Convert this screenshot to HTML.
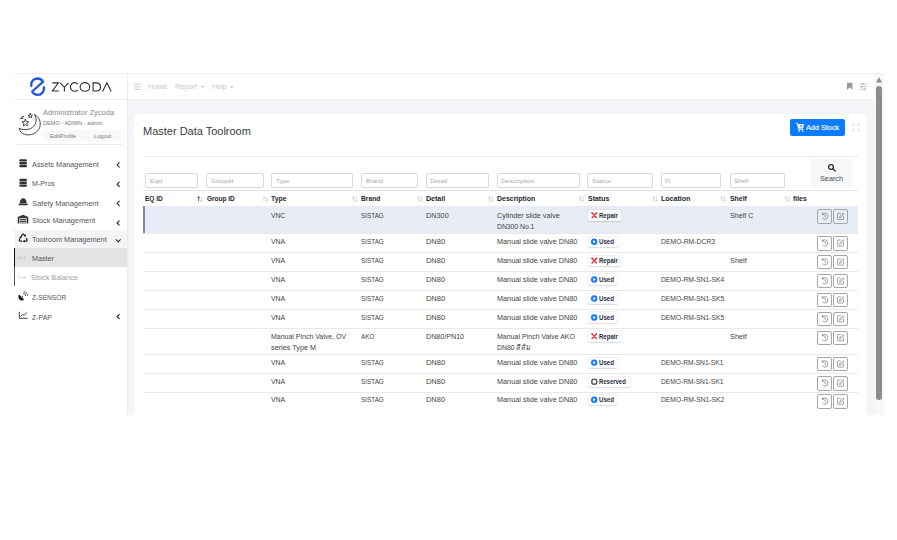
<!DOCTYPE html>
<html><head><meta charset="utf-8"><style>
html,body{margin:0;padding:0;width:897px;height:540px;overflow:hidden;background:#fff;}
body{position:relative;font-family:"Liberation Sans",sans-serif;}
.a{position:absolute;}
.t{position:absolute;white-space:pre;}
#clip{position:absolute;left:0;top:0;width:897px;height:415.5px;overflow:hidden;}
</style></head><body>
<div id="clip">
<div class="a" style="left:13.50px;top:73.00px;width:870.00px;height:342.50px;background:#fff;"></div>
<div class="a" style="left:13.50px;top:73.00px;width:870.00px;height:0.70px;background:#eeeeee;"></div>
<div class="a" style="left:127.50px;top:99.40px;width:746.50px;height:316.10px;background:#f4f5f9;"></div>
<div class="a" style="left:127.50px;top:98.70px;width:746.50px;height:0.70px;background:#efefef;"></div>
<div class="a" style="left:127.00px;top:73.70px;width:0.70px;height:341.80px;background:#ececec;"></div>
<div class="a" style="left:13.50px;top:98.50px;width:113.50px;height:0.60px;background:#f0f0f0;"></div>
<div class="a" style="left:874.00px;top:73.70px;width:9.50px;height:341.80px;background:#f8f8f8;"></div>
<div class="a" style="left:876.00px;top:85.80px;width:6.00px;height:314.70px;background:#8c8c8c;border-radius:3px;"></div>
<div class="t" style="left:42.80px;top:109.20px;font-size:7.6px;line-height:7.6px;color:#8a8a8a;font-weight:normal;transform:scaleX(0.9923);transform-origin:0 0;">Administrator Zycoda</div>
<div class="t" style="left:42.80px;top:120.80px;font-size:5.9px;line-height:5.9px;color:#7a7a7a;font-weight:normal;transform:scaleX(0.9468);transform-origin:0 0;">DEMO - ADMIN - admin</div>
<div class="a" style="left:42.80px;top:130.00px;width:80.20px;height:10.80px;background:#f7f8fa;"></div>
<div class="t" style="left:49.90px;top:133.90px;font-size:5.9px;line-height:5.9px;color:#777;font-weight:normal;transform:scaleX(0.9643);transform-origin:0 0;">EditProfile</div>
<div class="t" style="left:94.30px;top:133.90px;font-size:5.9px;line-height:5.9px;color:#777;font-weight:normal;transform:scaleX(0.9650);transform-origin:0 0;">Logout</div>
<div class="a" style="left:17.30px;top:144.40px;width:105.70px;height:0.70px;background:#ececec;"></div>
<div class="t" style="left:32.30px;top:161.10px;font-size:7.4px;line-height:7.4px;color:#555555;font-weight:normal;transform:scaleX(0.9915);transform-origin:0 0;">Assets Management</div>
<div class="t" style="left:32.30px;top:180.40px;font-size:7.4px;line-height:7.4px;color:#555555;font-weight:normal;transform:scaleX(0.9610);transform-origin:0 0;">M-Pros</div>
<div class="t" style="left:32.30px;top:199.50px;font-size:7.4px;line-height:7.4px;color:#555555;font-weight:normal;">Safety Management</div>
<div class="t" style="left:32.30px;top:217.40px;font-size:7.4px;line-height:7.4px;color:#555555;font-weight:normal;transform:scaleX(0.9939);transform-origin:0 0;">Stock Management</div>
<div class="a" style="left:14.00px;top:229.80px;width:113.00px;height:18.30px;background:#f3f4f6;"></div>
<div class="t" style="left:32.30px;top:235.70px;font-size:7.4px;line-height:7.4px;color:#555555;font-weight:normal;transform:scaleX(0.9882);transform-origin:0 0;">Toolroom Management</div>
<div class="a" style="left:14.00px;top:248.10px;width:113.00px;height:19.30px;background:#e3e3e3;"></div>
<div class="a" style="left:13.60px;top:248.10px;width:1.30px;height:19.30px;background:#111;"></div>
<div class="a" style="left:13.60px;top:267.40px;width:1.30px;height:18.60px;background:#555;"></div>
<div class="t" style="left:31.80px;top:254.60px;font-size:7.4px;line-height:7.4px;color:#555;font-weight:normal;transform:scaleX(0.9693);transform-origin:0 0;">Master</div>
<div class="t" style="left:31.40px;top:274.30px;font-size:7.4px;line-height:7.4px;color:#a0a0a0;font-weight:normal;transform:scaleX(0.9905);transform-origin:0 0;">Stock Balance</div>
<div class="t" style="left:32.00px;top:294.20px;font-size:7.4px;line-height:7.4px;color:#555555;font-weight:normal;transform:scaleX(0.8956);transform-origin:0 0;">Z-SENSOR</div>
<div class="t" style="left:32.00px;top:313.60px;font-size:7.4px;line-height:7.4px;color:#555555;font-weight:normal;transform:scaleX(0.9378);transform-origin:0 0;">Z-PAP</div>
<div class="t" style="left:147.80px;top:83.30px;font-size:7.4px;line-height:7.4px;color:#c6c6c6;font-weight:normal;transform:scaleX(0.9737);transform-origin:0 0;">Home</div>
<div class="t" style="left:174.60px;top:83.30px;font-size:7.4px;line-height:7.4px;color:#c6c6c6;font-weight:normal;transform:scaleX(1.0051);transform-origin:0 0;">Report</div>
<div class="t" style="left:211.60px;top:83.30px;font-size:7.4px;line-height:7.4px;color:#c6c6c6;font-weight:normal;transform:scaleX(0.9669);transform-origin:0 0;">Help</div>
<div class="a" style="left:133.80px;top:113.60px;width:733.00px;height:316.40px;background:#fff;border-radius:3px;box-shadow:0 0 1px rgba(0,0,0,0.06);"></div>
<div class="t" style="left:143.40px;top:125.60px;font-size:11.8px;line-height:11.8px;color:#3a3a3a;font-weight:normal;transform:scaleX(0.9314);transform-origin:0 0;">Master Data Toolroom</div>
<div class="a" style="left:789.90px;top:118.90px;width:55.10px;height:16.90px;background:#0b7cfe;border-radius:2px;"></div>
<div class="t" style="left:806.00px;top:124.10px;font-size:7.4px;line-height:7.4px;color:#fff;font-weight:normal;transform:scaleX(0.9855);transform-origin:0 0;-webkit-text-stroke:0.15px #fff;">Add Stock</div>
<div class="a" style="left:143.40px;top:156.20px;width:714.90px;height:0.70px;background:#ebebeb;"></div>
<div class="a" style="left:811.20px;top:158.60px;width:40.90px;height:28.60px;background:#f6f7f9;border-radius:2px;"></div>
<div class="t" style="left:820.20px;top:175.20px;font-size:7.4px;line-height:7.4px;color:#4a4a4a;font-weight:normal;transform:scaleX(0.9820);transform-origin:0 0;">Search</div>
<div class="a" style="left:145.20px;top:173.30px;width:52.90px;height:14.60px;box-sizing:border-box;border:0.7px solid #d8d8d8;border-radius:2px;background:#fff;"></div>
<div class="t" style="left:149.70px;top:177.90px;font-size:6.1px;line-height:6.1px;color:#ababab;font-weight:normal;transform:scaleX(1.0243);transform-origin:0 0;">Eqid</div>
<div class="a" style="left:206.30px;top:173.30px;width:57.50px;height:14.60px;box-sizing:border-box;border:0.7px solid #d8d8d8;border-radius:2px;background:#fff;"></div>
<div class="t" style="left:210.80px;top:177.90px;font-size:6.1px;line-height:6.1px;color:#ababab;font-weight:normal;transform:scaleX(1.0122);transform-origin:0 0;">GroupId</div>
<div class="a" style="left:271.20px;top:173.30px;width:81.60px;height:14.60px;box-sizing:border-box;border:0.7px solid #d8d8d8;border-radius:2px;background:#fff;"></div>
<div class="t" style="left:275.70px;top:177.90px;font-size:6.1px;line-height:6.1px;color:#ababab;font-weight:normal;transform:scaleX(1.0137);transform-origin:0 0;">Type</div>
<div class="a" style="left:361.10px;top:173.30px;width:56.80px;height:14.60px;box-sizing:border-box;border:0.7px solid #d8d8d8;border-radius:2px;background:#fff;"></div>
<div class="t" style="left:365.60px;top:177.90px;font-size:6.1px;line-height:6.1px;color:#ababab;font-weight:normal;transform:scaleX(1.0574);transform-origin:0 0;">Brand</div>
<div class="a" style="left:425.90px;top:173.30px;width:62.90px;height:14.60px;box-sizing:border-box;border:0.7px solid #d8d8d8;border-radius:2px;background:#fff;"></div>
<div class="t" style="left:430.40px;top:177.90px;font-size:6.1px;line-height:6.1px;color:#ababab;font-weight:normal;transform:scaleX(1.1030);transform-origin:0 0;">Detail</div>
<div class="a" style="left:496.70px;top:173.30px;width:82.90px;height:14.60px;box-sizing:border-box;border:0.7px solid #d8d8d8;border-radius:2px;background:#fff;"></div>
<div class="t" style="left:501.20px;top:177.90px;font-size:6.1px;line-height:6.1px;color:#ababab;font-weight:normal;transform:scaleX(1.0956);transform-origin:0 0;">Description</div>
<div class="a" style="left:587.10px;top:173.30px;width:66.10px;height:14.60px;box-sizing:border-box;border:0.7px solid #d8d8d8;border-radius:2px;background:#fff;"></div>
<div class="t" style="left:591.60px;top:177.90px;font-size:6.1px;line-height:6.1px;color:#ababab;font-weight:normal;transform:scaleX(1.1052);transform-origin:0 0;">Status</div>
<div class="a" style="left:660.70px;top:173.30px;width:60.70px;height:14.60px;box-sizing:border-box;border:0.7px solid #d8d8d8;border-radius:2px;background:#fff;"></div>
<div class="t" style="left:665.20px;top:177.90px;font-size:6.1px;line-height:6.1px;color:#ababab;font-weight:normal;transform:scaleX(0.9846);transform-origin:0 0;">Fl</div>
<div class="a" style="left:729.60px;top:173.30px;width:55.40px;height:14.60px;box-sizing:border-box;border:0.7px solid #d8d8d8;border-radius:2px;background:#fff;"></div>
<div class="t" style="left:734.10px;top:177.90px;font-size:6.1px;line-height:6.1px;color:#ababab;font-weight:normal;transform:scaleX(1.0223);transform-origin:0 0;">Shelf</div>
<div class="a" style="left:143.40px;top:189.60px;width:714.90px;height:1.40px;background:#dfe2e8;"></div>
<div class="a" style="left:143.40px;top:205.50px;width:714.90px;height:0.80px;background:#dcdcdc;"></div>
<div class="t" style="left:145.20px;top:195.00px;font-size:7.2px;line-height:7.2px;color:#262626;font-weight:bold;transform:scaleX(0.9092);transform-origin:0 0;">EQ ID</div>
<div class="t" style="left:206.70px;top:195.00px;font-size:7.2px;line-height:7.2px;color:#262626;font-weight:bold;transform:scaleX(0.9008);transform-origin:0 0;">Group ID</div>
<div class="t" style="left:271.20px;top:195.00px;font-size:7.2px;line-height:7.2px;color:#262626;font-weight:bold;transform:scaleX(0.9600);transform-origin:0 0;">Type</div>
<div class="t" style="left:361.10px;top:195.00px;font-size:7.2px;line-height:7.2px;color:#262626;font-weight:bold;transform:scaleX(0.9287);transform-origin:0 0;">Brand</div>
<div class="t" style="left:425.90px;top:195.00px;font-size:7.2px;line-height:7.2px;color:#262626;font-weight:bold;transform:scaleX(0.9807);transform-origin:0 0;">Detail</div>
<div class="t" style="left:496.70px;top:195.00px;font-size:7.2px;line-height:7.2px;color:#262626;font-weight:bold;transform:scaleX(0.9685);transform-origin:0 0;">Description</div>
<div class="t" style="left:587.70px;top:195.00px;font-size:7.2px;line-height:7.2px;color:#262626;font-weight:bold;transform:scaleX(0.9696);transform-origin:0 0;">Status</div>
<div class="t" style="left:660.70px;top:195.00px;font-size:7.2px;line-height:7.2px;color:#262626;font-weight:bold;transform:scaleX(0.9815);transform-origin:0 0;">Location</div>
<div class="t" style="left:729.60px;top:195.00px;font-size:7.2px;line-height:7.2px;color:#262626;font-weight:bold;transform:scaleX(0.9614);transform-origin:0 0;">Shelf</div>
<div class="t" style="left:793.40px;top:195.00px;font-size:7.2px;line-height:7.2px;color:#262626;font-weight:bold;transform:scaleX(0.9520);transform-origin:0 0;">files</div>
<div class="a" style="left:143.40px;top:206.30px;width:714.90px;height:27.40px;background:#e7ecf6;"></div>
<div class="a" style="left:143.40px;top:206.30px;width:1.50px;height:27.40px;background:#7d8bb3;"></div>
<div class="t" style="left:271.20px;top:212.00px;font-size:7.5px;line-height:7.5px;color:#444444;font-weight:normal;transform:scaleX(0.8963);transform-origin:0 0;">VNC</div>
<div class="t" style="left:361.10px;top:212.00px;font-size:7.5px;line-height:7.5px;color:#444444;font-weight:normal;transform:scaleX(0.8459);transform-origin:0 0;">SISTAG</div>
<div class="t" style="left:425.90px;top:212.00px;font-size:7.5px;line-height:7.5px;color:#444444;font-weight:normal;transform:scaleX(0.9718);transform-origin:0 0;">DN300</div>
<div class="t" style="left:496.70px;top:212.00px;font-size:7.5px;line-height:7.5px;color:#444444;font-weight:normal;transform:scaleX(0.9733);transform-origin:0 0;">Cylinder slide valve</div>
<div class="t" style="left:496.70px;top:222.70px;font-size:7.5px;line-height:7.5px;color:#444444;font-weight:normal;transform:scaleX(0.9060);transform-origin:0 0;">DN300 No.1</div>
<div class="a" style="left:587.80px;top:210.30px;width:33.60px;height:10.50px;background:#fdfdfe;border-radius:2px;box-shadow:0 0 0 0.5px rgba(0,0,0,0.06),0 0.5px 1.2px rgba(0,0,0,0.12);"></div>
<div class="t" style="left:599.00px;top:212.80px;font-size:6.8px;line-height:6.8px;color:#2a2f3a;font-weight:bold;transform:scaleX(0.8886);transform-origin:0 0;">Repair</div>
<div class="t" style="left:729.60px;top:212.00px;font-size:7.5px;line-height:7.5px;color:#444444;font-weight:normal;transform:scaleX(0.9509);transform-origin:0 0;">Shelf C</div>
<div class="a" style="left:817.10px;top:209.30px;width:14.70px;height:14.60px;box-sizing:border-box;border:0.8px solid #a2a7ae;border-radius:2px;"></div>
<div class="a" style="left:833.10px;top:209.30px;width:14.70px;height:14.60px;box-sizing:border-box;border:0.8px solid #a2a7ae;border-radius:2px;"></div>
<div class="a" style="left:143.40px;top:233.35px;width:714.90px;height:0.70px;background:#e9e9e9;"></div>
<div class="t" style="left:271.20px;top:238.30px;font-size:7.5px;line-height:7.5px;color:#444444;font-weight:normal;transform:scaleX(0.9208);transform-origin:0 0;">VNA</div>
<div class="t" style="left:361.10px;top:238.30px;font-size:7.5px;line-height:7.5px;color:#444444;font-weight:normal;transform:scaleX(0.8459);transform-origin:0 0;">SISTAG</div>
<div class="t" style="left:425.90px;top:238.30px;font-size:7.5px;line-height:7.5px;color:#444444;font-weight:normal;">DN80</div>
<div class="t" style="left:496.70px;top:238.30px;font-size:7.5px;line-height:7.5px;color:#444444;font-weight:normal;transform:scaleX(0.9690);transform-origin:0 0;">Manual slide valve DN80</div>
<div class="a" style="left:587.80px;top:236.60px;width:30.00px;height:10.50px;background:#fdfdfe;border-radius:2px;box-shadow:0 0 0 0.5px rgba(0,0,0,0.06),0 0.5px 1.2px rgba(0,0,0,0.12);"></div>
<div class="t" style="left:599.00px;top:239.10px;font-size:6.8px;line-height:6.8px;color:#2a2f3a;font-weight:bold;transform:scaleX(0.9023);transform-origin:0 0;">Used</div>
<div class="t" style="left:660.70px;top:238.30px;font-size:7.5px;line-height:7.5px;color:#444444;font-weight:normal;transform:scaleX(0.9078);transform-origin:0 0;">DEMO-RM-DCR3</div>
<div class="a" style="left:817.10px;top:236.00px;width:14.70px;height:14.60px;box-sizing:border-box;border:0.8px solid #a2a7ae;border-radius:2px;"></div>
<div class="a" style="left:833.10px;top:236.00px;width:14.70px;height:14.60px;box-sizing:border-box;border:0.8px solid #a2a7ae;border-radius:2px;"></div>
<div class="a" style="left:143.40px;top:251.85px;width:714.90px;height:0.70px;background:#e9e9e9;"></div>
<div class="t" style="left:271.20px;top:257.20px;font-size:7.5px;line-height:7.5px;color:#444444;font-weight:normal;transform:scaleX(0.9208);transform-origin:0 0;">VNA</div>
<div class="t" style="left:361.10px;top:257.20px;font-size:7.5px;line-height:7.5px;color:#444444;font-weight:normal;transform:scaleX(0.8459);transform-origin:0 0;">SISTAG</div>
<div class="t" style="left:425.90px;top:257.20px;font-size:7.5px;line-height:7.5px;color:#444444;font-weight:normal;">DN80</div>
<div class="t" style="left:496.70px;top:257.20px;font-size:7.5px;line-height:7.5px;color:#444444;font-weight:normal;transform:scaleX(0.9690);transform-origin:0 0;">Manual slide valve DN80</div>
<div class="a" style="left:587.80px;top:255.50px;width:33.60px;height:10.50px;background:#fdfdfe;border-radius:2px;box-shadow:0 0 0 0.5px rgba(0,0,0,0.06),0 0.5px 1.2px rgba(0,0,0,0.12);"></div>
<div class="t" style="left:599.00px;top:258.00px;font-size:6.8px;line-height:6.8px;color:#2a2f3a;font-weight:bold;transform:scaleX(0.8886);transform-origin:0 0;">Repair</div>
<div class="t" style="left:729.60px;top:257.20px;font-size:7.5px;line-height:7.5px;color:#444444;font-weight:normal;transform:scaleX(0.9761);transform-origin:0 0;">Shelf</div>
<div class="a" style="left:817.10px;top:254.90px;width:14.70px;height:14.60px;box-sizing:border-box;border:0.8px solid #a2a7ae;border-radius:2px;"></div>
<div class="a" style="left:833.10px;top:254.90px;width:14.70px;height:14.60px;box-sizing:border-box;border:0.8px solid #a2a7ae;border-radius:2px;"></div>
<div class="a" style="left:143.40px;top:270.75px;width:714.90px;height:0.70px;background:#e9e9e9;"></div>
<div class="t" style="left:271.20px;top:276.10px;font-size:7.5px;line-height:7.5px;color:#444444;font-weight:normal;transform:scaleX(0.9208);transform-origin:0 0;">VNA</div>
<div class="t" style="left:361.10px;top:276.10px;font-size:7.5px;line-height:7.5px;color:#444444;font-weight:normal;transform:scaleX(0.8459);transform-origin:0 0;">SISTAG</div>
<div class="t" style="left:425.90px;top:276.10px;font-size:7.5px;line-height:7.5px;color:#444444;font-weight:normal;">DN80</div>
<div class="t" style="left:496.70px;top:276.10px;font-size:7.5px;line-height:7.5px;color:#444444;font-weight:normal;transform:scaleX(0.9690);transform-origin:0 0;">Manual slide valve DN80</div>
<div class="a" style="left:587.80px;top:274.40px;width:30.00px;height:10.50px;background:#fdfdfe;border-radius:2px;box-shadow:0 0 0 0.5px rgba(0,0,0,0.06),0 0.5px 1.2px rgba(0,0,0,0.12);"></div>
<div class="t" style="left:599.00px;top:276.90px;font-size:6.8px;line-height:6.8px;color:#2a2f3a;font-weight:bold;transform:scaleX(0.9023);transform-origin:0 0;">Used</div>
<div class="t" style="left:660.70px;top:276.10px;font-size:7.5px;line-height:7.5px;color:#444444;font-weight:normal;transform:scaleX(0.8987);transform-origin:0 0;">DEMO-RM-SN1-SK4</div>
<div class="a" style="left:817.10px;top:273.80px;width:14.70px;height:14.60px;box-sizing:border-box;border:0.8px solid #a2a7ae;border-radius:2px;"></div>
<div class="a" style="left:833.10px;top:273.80px;width:14.70px;height:14.60px;box-sizing:border-box;border:0.8px solid #a2a7ae;border-radius:2px;"></div>
<div class="a" style="left:143.40px;top:289.85px;width:714.90px;height:0.70px;background:#e9e9e9;"></div>
<div class="t" style="left:271.20px;top:295.10px;font-size:7.5px;line-height:7.5px;color:#444444;font-weight:normal;transform:scaleX(0.9208);transform-origin:0 0;">VNA</div>
<div class="t" style="left:361.10px;top:295.10px;font-size:7.5px;line-height:7.5px;color:#444444;font-weight:normal;transform:scaleX(0.8459);transform-origin:0 0;">SISTAG</div>
<div class="t" style="left:425.90px;top:295.10px;font-size:7.5px;line-height:7.5px;color:#444444;font-weight:normal;">DN80</div>
<div class="t" style="left:496.70px;top:295.10px;font-size:7.5px;line-height:7.5px;color:#444444;font-weight:normal;transform:scaleX(0.9690);transform-origin:0 0;">Manual slide valve DN80</div>
<div class="a" style="left:587.80px;top:293.40px;width:30.00px;height:10.50px;background:#fdfdfe;border-radius:2px;box-shadow:0 0 0 0.5px rgba(0,0,0,0.06),0 0.5px 1.2px rgba(0,0,0,0.12);"></div>
<div class="t" style="left:599.00px;top:295.90px;font-size:6.8px;line-height:6.8px;color:#2a2f3a;font-weight:bold;transform:scaleX(0.9023);transform-origin:0 0;">Used</div>
<div class="t" style="left:660.70px;top:295.10px;font-size:7.5px;line-height:7.5px;color:#444444;font-weight:normal;transform:scaleX(0.8987);transform-origin:0 0;">DEMO-RM-SN1-SK5</div>
<div class="a" style="left:817.10px;top:292.80px;width:14.70px;height:14.60px;box-sizing:border-box;border:0.8px solid #a2a7ae;border-radius:2px;"></div>
<div class="a" style="left:833.10px;top:292.80px;width:14.70px;height:14.60px;box-sizing:border-box;border:0.8px solid #a2a7ae;border-radius:2px;"></div>
<div class="a" style="left:143.40px;top:308.95px;width:714.90px;height:0.70px;background:#e9e9e9;"></div>
<div class="t" style="left:271.20px;top:314.10px;font-size:7.5px;line-height:7.5px;color:#444444;font-weight:normal;transform:scaleX(0.9208);transform-origin:0 0;">VNA</div>
<div class="t" style="left:361.10px;top:314.10px;font-size:7.5px;line-height:7.5px;color:#444444;font-weight:normal;transform:scaleX(0.8459);transform-origin:0 0;">SISTAG</div>
<div class="t" style="left:425.90px;top:314.10px;font-size:7.5px;line-height:7.5px;color:#444444;font-weight:normal;">DN80</div>
<div class="t" style="left:496.70px;top:314.10px;font-size:7.5px;line-height:7.5px;color:#444444;font-weight:normal;transform:scaleX(0.9690);transform-origin:0 0;">Manual slide valve DN80</div>
<div class="a" style="left:587.80px;top:312.40px;width:30.00px;height:10.50px;background:#fdfdfe;border-radius:2px;box-shadow:0 0 0 0.5px rgba(0,0,0,0.06),0 0.5px 1.2px rgba(0,0,0,0.12);"></div>
<div class="t" style="left:599.00px;top:314.90px;font-size:6.8px;line-height:6.8px;color:#2a2f3a;font-weight:bold;transform:scaleX(0.9023);transform-origin:0 0;">Used</div>
<div class="t" style="left:660.70px;top:314.10px;font-size:7.5px;line-height:7.5px;color:#444444;font-weight:normal;transform:scaleX(0.8987);transform-origin:0 0;">DEMO-RM-SN1-SK5</div>
<div class="a" style="left:817.10px;top:311.80px;width:14.70px;height:14.60px;box-sizing:border-box;border:0.8px solid #a2a7ae;border-radius:2px;"></div>
<div class="a" style="left:833.10px;top:311.80px;width:14.70px;height:14.60px;box-sizing:border-box;border:0.8px solid #a2a7ae;border-radius:2px;"></div>
<div class="a" style="left:143.40px;top:327.85px;width:714.90px;height:0.70px;background:#e9e9e9;"></div>
<div class="t" style="left:271.20px;top:332.90px;font-size:7.5px;line-height:7.5px;color:#444444;font-weight:normal;transform:scaleX(0.9300);transform-origin:0 0;">Manual Pinch Valve, OV</div>
<div class="t" style="left:271.20px;top:343.60px;font-size:7.5px;line-height:7.5px;color:#444444;font-weight:normal;transform:scaleX(0.9668);transform-origin:0 0;">series Type M</div>
<div class="t" style="left:361.10px;top:332.90px;font-size:7.5px;line-height:7.5px;color:#444444;font-weight:normal;transform:scaleX(0.8458);transform-origin:0 0;">AKO</div>
<div class="t" style="left:425.90px;top:332.90px;font-size:7.5px;line-height:7.5px;color:#444444;font-weight:normal;transform:scaleX(0.9518);transform-origin:0 0;">DN80/PN10</div>
<div class="t" style="left:496.70px;top:332.90px;font-size:7.5px;line-height:7.5px;color:#444444;font-weight:normal;transform:scaleX(0.9369);transform-origin:0 0;">Manual Pinch Valve AKO</div>
<div class="t" style="left:496.70px;top:343.60px;font-size:7.5px;line-height:7.5px;color:#444444;font-weight:normal;transform:scaleX(0.9155);transform-origin:0 0;">DN80 สีส้ม</div>
<div class="a" style="left:587.80px;top:331.20px;width:33.60px;height:10.50px;background:#fdfdfe;border-radius:2px;box-shadow:0 0 0 0.5px rgba(0,0,0,0.06),0 0.5px 1.2px rgba(0,0,0,0.12);"></div>
<div class="t" style="left:599.00px;top:333.70px;font-size:6.8px;line-height:6.8px;color:#2a2f3a;font-weight:bold;transform:scaleX(0.8886);transform-origin:0 0;">Repair</div>
<div class="t" style="left:729.60px;top:332.90px;font-size:7.5px;line-height:7.5px;color:#444444;font-weight:normal;transform:scaleX(0.9761);transform-origin:0 0;">Shelf</div>
<div class="a" style="left:817.10px;top:330.60px;width:14.70px;height:14.60px;box-sizing:border-box;border:0.8px solid #a2a7ae;border-radius:2px;"></div>
<div class="a" style="left:833.10px;top:330.60px;width:14.70px;height:14.60px;box-sizing:border-box;border:0.8px solid #a2a7ae;border-radius:2px;"></div>
<div class="a" style="left:143.40px;top:353.95px;width:714.90px;height:0.70px;background:#e9e9e9;"></div>
<div class="t" style="left:271.20px;top:359.20px;font-size:7.5px;line-height:7.5px;color:#444444;font-weight:normal;transform:scaleX(0.9208);transform-origin:0 0;">VNA</div>
<div class="t" style="left:361.10px;top:359.20px;font-size:7.5px;line-height:7.5px;color:#444444;font-weight:normal;transform:scaleX(0.8459);transform-origin:0 0;">SISTAG</div>
<div class="t" style="left:425.90px;top:359.20px;font-size:7.5px;line-height:7.5px;color:#444444;font-weight:normal;">DN80</div>
<div class="t" style="left:496.70px;top:359.20px;font-size:7.5px;line-height:7.5px;color:#444444;font-weight:normal;transform:scaleX(0.9690);transform-origin:0 0;">Manual slide valve DN80</div>
<div class="a" style="left:587.80px;top:357.50px;width:30.00px;height:10.50px;background:#fdfdfe;border-radius:2px;box-shadow:0 0 0 0.5px rgba(0,0,0,0.06),0 0.5px 1.2px rgba(0,0,0,0.12);"></div>
<div class="t" style="left:599.00px;top:360.00px;font-size:6.8px;line-height:6.8px;color:#2a2f3a;font-weight:bold;transform:scaleX(0.9023);transform-origin:0 0;">Used</div>
<div class="t" style="left:660.70px;top:359.20px;font-size:7.5px;line-height:7.5px;color:#444444;font-weight:normal;transform:scaleX(0.8859);transform-origin:0 0;">DEMO-RM-SN1-SK1</div>
<div class="a" style="left:817.10px;top:356.90px;width:14.70px;height:14.60px;box-sizing:border-box;border:0.8px solid #a2a7ae;border-radius:2px;"></div>
<div class="a" style="left:833.10px;top:356.90px;width:14.70px;height:14.60px;box-sizing:border-box;border:0.8px solid #a2a7ae;border-radius:2px;"></div>
<div class="a" style="left:143.40px;top:373.35px;width:714.90px;height:0.70px;background:#e9e9e9;"></div>
<div class="t" style="left:271.20px;top:378.30px;font-size:7.5px;line-height:7.5px;color:#444444;font-weight:normal;transform:scaleX(0.9208);transform-origin:0 0;">VNA</div>
<div class="t" style="left:361.10px;top:378.30px;font-size:7.5px;line-height:7.5px;color:#444444;font-weight:normal;transform:scaleX(0.8459);transform-origin:0 0;">SISTAG</div>
<div class="t" style="left:425.90px;top:378.30px;font-size:7.5px;line-height:7.5px;color:#444444;font-weight:normal;">DN80</div>
<div class="t" style="left:496.70px;top:378.30px;font-size:7.5px;line-height:7.5px;color:#444444;font-weight:normal;transform:scaleX(0.9690);transform-origin:0 0;">Manual slide valve DN80</div>
<div class="a" style="left:587.80px;top:376.60px;width:43.00px;height:10.50px;background:#fdfdfe;border-radius:2px;box-shadow:0 0 0 0.5px rgba(0,0,0,0.06),0 0.5px 1.2px rgba(0,0,0,0.12);"></div>
<div class="t" style="left:599.00px;top:379.10px;font-size:6.8px;line-height:6.8px;color:#2a2f3a;font-weight:bold;transform:scaleX(0.8755);transform-origin:0 0;">Reserved</div>
<div class="t" style="left:660.70px;top:378.30px;font-size:7.5px;line-height:7.5px;color:#444444;font-weight:normal;transform:scaleX(0.8859);transform-origin:0 0;">DEMO-RM-SN1-SK1</div>
<div class="a" style="left:817.10px;top:376.00px;width:14.70px;height:14.60px;box-sizing:border-box;border:0.8px solid #a2a7ae;border-radius:2px;"></div>
<div class="a" style="left:833.10px;top:376.00px;width:14.70px;height:14.60px;box-sizing:border-box;border:0.8px solid #a2a7ae;border-radius:2px;"></div>
<div class="a" style="left:143.40px;top:391.85px;width:714.90px;height:0.70px;background:#e9e9e9;"></div>
<div class="t" style="left:271.20px;top:396.40px;font-size:7.5px;line-height:7.5px;color:#444444;font-weight:normal;transform:scaleX(0.9208);transform-origin:0 0;">VNA</div>
<div class="t" style="left:361.10px;top:396.40px;font-size:7.5px;line-height:7.5px;color:#444444;font-weight:normal;transform:scaleX(0.8459);transform-origin:0 0;">SISTAG</div>
<div class="t" style="left:425.90px;top:396.40px;font-size:7.5px;line-height:7.5px;color:#444444;font-weight:normal;">DN80</div>
<div class="t" style="left:496.70px;top:396.40px;font-size:7.5px;line-height:7.5px;color:#444444;font-weight:normal;transform:scaleX(0.9690);transform-origin:0 0;">Manual slide valve DN80</div>
<div class="a" style="left:587.80px;top:394.70px;width:30.00px;height:10.50px;background:#fdfdfe;border-radius:2px;box-shadow:0 0 0 0.5px rgba(0,0,0,0.06),0 0.5px 1.2px rgba(0,0,0,0.12);"></div>
<div class="t" style="left:599.00px;top:397.20px;font-size:6.8px;line-height:6.8px;color:#2a2f3a;font-weight:bold;transform:scaleX(0.9023);transform-origin:0 0;">Used</div>
<div class="t" style="left:660.70px;top:396.40px;font-size:7.5px;line-height:7.5px;color:#444444;font-weight:normal;transform:scaleX(0.8987);transform-origin:0 0;">DEMO-RM-SN1-SK2</div>
<div class="a" style="left:817.10px;top:394.10px;width:14.70px;height:14.60px;box-sizing:border-box;border:0.8px solid #a2a7ae;border-radius:2px;"></div>
<div class="a" style="left:833.10px;top:394.10px;width:14.70px;height:14.60px;box-sizing:border-box;border:0.8px solid #a2a7ae;border-radius:2px;"></div>
<svg class="a" style="left:0;top:0" width="897" height="540" viewBox="0 0 897 540">
<path d="M876 82.5 L879 77.2 L882 82.5 Z" fill="#8a8a8a"/>
<path d="M31.3,85.8 C30.8,81.3 33.6,78.6 37.2,78.5 C40,78.4 42.2,79.9 43.1,81.7 L32.2,91.5 C33.3,93.7 35.5,94.9 37.9,94.9 C41.6,94.8 44.2,91.8 44,87.3" fill="none" stroke="#2457d0" stroke-width="2.3" stroke-linecap="round" stroke-linejoin="round"/>
<g fill="none" stroke="#2e2e2e" stroke-width="1.1" stroke-linejoin="miter"><path d="M52.3,82.9 H58.5 L52.3,91 H58.9"/><path d="M60.3,82.9 L64.4,87.3 L68.5,82.9 M64.4,87.3 V91.4"/><path d="M77.9,84.1 A4.3,4.3 0 1 0 77.9,89.8"/><ellipse cx="84.95" cy="86.95" rx="4.8" ry="4.35"/><path d="M93.1,82.9 V91 H96.3 C99.3,91 100.5,89 100.5,86.95 C100.5,84.9 99.3,82.9 96.3,82.9 Z"/><path d="M102.6,91.4 L106.9,82.7 L111.2,91.4"/></g>
<g fill="none" stroke="#333" stroke-width="0.9" stroke-linejoin="round" stroke-linecap="round"><path d="M34.6,114.8 C39.5,117 41.4,122.5 39.6,127.6 C37.6,133 31,136 24.8,134.5 C22,133.7 20,131.6 19.1,128.3 C24,130.5 30.3,130 33.8,126.2 C36.6,123 37,118.3 34.6,114.8 Z"/><path d="M25.4,119.3 L26.3,121.6 L28.8,121.8 L26.9,123.4 L27.5,125.9 L25.4,124.5 L23.3,125.9 L23.9,123.4 L22,121.8 L24.5,121.6 Z"/><path d="M30.3,113.6 L30.9,115.1 L32.5,115.2 L31.3,116.2 L31.7,117.8 L30.3,116.9 L28.9,117.8 L29.3,116.2 L28.1,115.2 L29.7,115.1 Z"/><path d="M20.2,118.8 L21.5,118.2 L22.2,117 M21.5,118.2 L23.2,118.4 M22.2,117 L23.8,116.3"/></g>
<path d="M119.2,162.70 L117.1,164.90 L119.2,167.10" fill="none" stroke="#2b2b2b" stroke-width="1.15" stroke-linecap="round" stroke-linejoin="round"/>
<path d="M119.2,182.10 L117.1,184.30 L119.2,186.50" fill="none" stroke="#2b2b2b" stroke-width="1.15" stroke-linecap="round" stroke-linejoin="round"/>
<path d="M119.2,201.20 L117.1,203.40 L119.2,205.60" fill="none" stroke="#2b2b2b" stroke-width="1.15" stroke-linecap="round" stroke-linejoin="round"/>
<path d="M119.2,220.80 L117.1,223.00 L119.2,225.20" fill="none" stroke="#2b2b2b" stroke-width="1.15" stroke-linecap="round" stroke-linejoin="round"/>
<path d="M116.1,239.7 L118.2,241.8 L120.3,239.7" fill="none" stroke="#2b2b2b" stroke-width="1.15" stroke-linecap="round" stroke-linejoin="round"/>
<path d="M119.2,314.30 L117.1,316.50 L119.2,318.70" fill="none" stroke="#2b2b2b" stroke-width="1.15" stroke-linecap="round" stroke-linejoin="round"/>
<g fill="#333"><rect x="19.3" y="159.20" width="7.7" height="2.4" rx="1.2"/><rect x="19.3" y="162.10" width="7.7" height="2.4" rx="1.2"/><rect x="19.3" y="165.00" width="7.7" height="2.3" rx="1.1"/></g>
<g fill="#333"><rect x="19.3" y="178.70" width="7.7" height="2.4" rx="1.2"/><rect x="19.3" y="181.60" width="7.7" height="2.4" rx="1.2"/><rect x="19.3" y="184.50" width="7.7" height="2.3" rx="1.1"/></g>
<g fill="#333"><path d="M19.8,203.2 C19.8,200 21.5,198.3 23.2,198.3 C24.9,198.3 26.6,200 26.6,203.2 Z"/><rect x="18.6" y="203.6" width="9.2" height="1.6" rx="0.8"/></g>
<g><path d="M17.7,223.5 L17.7,217 L23,214.7 L28.3,217 L28.3,223.5 L26.7,223.5 L26.7,218.2 L19.3,218.2 L19.3,223.5 Z" fill="#333"/><rect x="19.8" y="219" width="6.4" height="1.3" fill="#444"/><rect x="19.8" y="220.9" width="6.4" height="1.3" fill="#444"/><rect x="19.8" y="222.6" width="6.4" height="0.9" fill="#666"/></g>
<g fill="none" stroke="#222" stroke-width="1.25" stroke-linecap="round" stroke-linejoin="round"><path d="M20.6,237.4 L22.4,234.6 C22.8,234 23.6,234 24,234.6 L24.7,235.7"/><path d="M26.3,238.3 L27,239.6 C27.3,240.3 26.9,241.2 26.1,241.2 L24.3,241.2"/><path d="M21.6,241.2 L20.3,241.2 C19.5,241.2 19,240.4 19.4,239.7 L19.7,239.1"/></g><g fill="#222"><path d="M23.6,236.2 L26.1,236.6 L25.6,234.3 Z"/><path d="M24.6,239.8 L24.6,242.6 L22.6,241.2 Z"/><path d="M18.8,238.3 L21.5,238.5 L20.6,236.2 Z"/></g>
<path d="M18.6,256.20 L18.6,258.00 L25.8,258.00 M24.2,256.60 L25.8,258.00 L24.2,259.40" fill="none" stroke="#bdbdbd" stroke-width="0.7" stroke-linecap="round" stroke-linejoin="round"/>
<path d="M18.6,275.60 L18.6,277.40 L25.8,277.40 M24.2,276.00 L25.8,277.40 L24.2,278.80" fill="none" stroke="#d0d0d0" stroke-width="0.7" stroke-linecap="round" stroke-linejoin="round"/>
<g><path d="M19.2,294.6 L24.3,299.7 C22.4,301 19.6,300.5 18.7,298.4 C18.2,297.1 18.4,295.6 19.2,294.6 Z" fill="#1e1e1e"/><path d="M21.7,297.2 L23,295.9" stroke="#1e1e1e" stroke-width="0.9"/><path d="M23.3,293.4 C24.6,293.6 25.6,294.6 25.8,295.9" fill="none" stroke="#333" stroke-width="1"/><path d="M23.5,291.5 C25.7,291.8 27.4,293.5 27.7,295.7" fill="none" stroke="#555" stroke-width="1"/></g>
<g fill="none" stroke="#333" stroke-width="0.9" stroke-linecap="round" stroke-linejoin="round"><path d="M19.3,312.2 L19.3,318.3 L27.2,318.3"/><path d="M20.8,316.2 L22.6,314.3 L24,315.3 L26.6,312.8"/></g>
<g stroke="#bfbfbf" stroke-width="0.8"><path d="M134.2,84.2 H140.8 M134.2,86.8 H140.8 M134.2,89.3 H140.8"/></g>
<path d="M200.8,86 L204.2,86 L202.5,88.1 Z" fill="#bdbdbd"/>
<path d="M230.2,86 L233.6,86 L231.9,88.1 Z" fill="#bdbdbd"/>
<path d="M847,82.8 H852.4 V89.8 L849.7,87.6 L847,89.8 Z" fill="#9c9c9c"/>
<g stroke="#a8a8a8" stroke-width="0.6"><path d="M859.3,84 H867 M859.3,86.6 H867 M859.3,89.2 H867"/></g><g fill="#a8a8a8"><rect x="862.5" y="83.1" width="1.2" height="1.8"/><rect x="861" y="85.7" width="1.2" height="1.8"/><rect x="863.6" y="88.3" width="1.2" height="1.8"/></g>
<g fill="#fff"><path d="M795.8,122.8 H797.5 L797.9,124.1 H804 L803.1,128.4 H798.9 L799.1,129.2 H803.3 V130 H798.4 L797,123.7 H795.8 Z"/><circle cx="799.3" cy="131" r="0.85"/><circle cx="802.7" cy="131" r="0.85"/></g><path d="M799.6,126.2 H802.6 M801.1,124.8 V127.6" stroke="#0b7cfe" stroke-width="0.6"/>
<g fill="none" stroke="#bcbcbc" stroke-width="0.6"><path d="M853,126 V124.3 H854.7 M857.3,124.3 H859 V126 M859,128.6 V130.3 H857.3 M854.7,130.3 H853 V128.6"/></g>
<g fill="none" stroke="#2b2f38" stroke-width="1.3"><circle cx="831" cy="167" r="2.4"/><path d="M832.8,168.8 L835.2,171" stroke-linecap="round"/></g>
<g fill="none" stroke-width="0.75"><path d="M198.70,201.4 V196.7 M197.60,197.9 L198.70,196.7 L199.80,197.9" stroke="#333"/><path d="M201.50,196.7 V201.4 M200.40,200.2 L201.50,201.4 L202.60,200.2" stroke="#c4c4c4"/></g>
<g fill="none" stroke-width="0.75"><path d="M264.00,201.4 V196.7 M262.90,197.9 L264.00,196.7 L265.10,197.9" stroke="#c4c4c4"/><path d="M266.80,196.7 V201.4 M265.70,200.2 L266.80,201.4 L267.90,200.2" stroke="#c4c4c4"/></g>
<g fill="none" stroke-width="0.75"><path d="M353.40,201.4 V196.7 M352.30,197.9 L353.40,196.7 L354.50,197.9" stroke="#c4c4c4"/><path d="M356.20,196.7 V201.4 M355.10,200.2 L356.20,201.4 L357.30,200.2" stroke="#c4c4c4"/></g>
<g fill="none" stroke-width="0.75"><path d="M418.40,201.4 V196.7 M417.30,197.9 L418.40,196.7 L419.50,197.9" stroke="#c4c4c4"/><path d="M421.20,196.7 V201.4 M420.10,200.2 L421.20,201.4 L422.30,200.2" stroke="#c4c4c4"/></g>
<g fill="none" stroke-width="0.75"><path d="M489.40,201.4 V196.7 M488.30,197.9 L489.40,196.7 L490.50,197.9" stroke="#c4c4c4"/><path d="M492.20,196.7 V201.4 M491.10,200.2 L492.20,201.4 L493.30,200.2" stroke="#c4c4c4"/></g>
<g fill="none" stroke-width="0.75"><path d="M580.10,201.4 V196.7 M579.00,197.9 L580.10,196.7 L581.20,197.9" stroke="#c4c4c4"/><path d="M582.90,196.7 V201.4 M581.80,200.2 L582.90,201.4 L584.00,200.2" stroke="#c4c4c4"/></g>
<g fill="none" stroke-width="0.75"><path d="M653.50,201.4 V196.7 M652.40,197.9 L653.50,196.7 L654.60,197.9" stroke="#c4c4c4"/><path d="M656.30,196.7 V201.4 M655.20,200.2 L656.30,201.4 L657.40,200.2" stroke="#c4c4c4"/></g>
<g fill="none" stroke-width="0.75"><path d="M721.70,201.4 V196.7 M720.60,197.9 L721.70,196.7 L722.80,197.9" stroke="#c4c4c4"/><path d="M724.50,196.7 V201.4 M723.40,200.2 L724.50,201.4 L725.60,200.2" stroke="#c4c4c4"/></g>
<g fill="none" stroke-width="0.75"><path d="M786.10,201.4 V196.7 M785.00,197.9 L786.10,196.7 L787.20,197.9" stroke="#c4c4c4"/><path d="M788.90,196.7 V201.4 M787.80,200.2 L788.90,201.4 L790.00,200.2" stroke="#c4c4c4"/></g>
<g stroke="#e8394a" stroke-width="1.4" stroke-linecap="round"><path d="M592.1,213.10 L596.5,217.70 M596.5,213.10 L592.1,217.70"/></g><circle cx="592.2" cy="213.20" r="0.9" fill="#e8394a"/><circle cx="596.4" cy="213.20" r="0.9" fill="#e8394a"/>
<g fill="none" stroke="#5d626a" stroke-width="0.6" stroke-linecap="round" stroke-linejoin="round"><path d="M822.6,214.20 C823.3,213.50 824.1,213.20 824.9,213.20 C826.6,213.20 827.9,214.60 827.9,216.30 C827.9,218.00 826.6,219.40 824.9,219.40 C824,219.40 823.3,219.10 822.7,218.50"/><path d="M822.3,213.00 L822.4,214.50 L823.9,214.50"/><path d="M825,215.00 V216.50 L826,217.40"/></g>
<g fill="none" stroke="#5d626a" stroke-width="0.6" stroke-linecap="round" stroke-linejoin="round"><path d="M840.3,213.30 H838.2 Q837.6,213.30 837.6,213.90 V218.90 Q837.6,219.50 838.2,219.50 H842.9 Q843.5,219.50 843.5,218.90 V216.70"/><path d="M839.7,217.50 L840,216.10 L843,213.10 L844,214.10 L841,217.10 Z"/></g>
<circle cx="594.2" cy="241.70" r="3.2" fill="#0b7cfe"/><path d="M593.2,240.00 L595.9,241.70 L593.2,243.40 Z" fill="#fff"/>
<g fill="none" stroke="#5d626a" stroke-width="0.6" stroke-linecap="round" stroke-linejoin="round"><path d="M822.6,240.90 C823.3,240.20 824.1,239.90 824.9,239.90 C826.6,239.90 827.9,241.30 827.9,243.00 C827.9,244.70 826.6,246.10 824.9,246.10 C824,246.10 823.3,245.80 822.7,245.20"/><path d="M822.3,239.70 L822.4,241.20 L823.9,241.20"/><path d="M825,241.70 V243.20 L826,244.10"/></g>
<g fill="none" stroke="#5d626a" stroke-width="0.6" stroke-linecap="round" stroke-linejoin="round"><path d="M840.3,240.00 H838.2 Q837.6,240.00 837.6,240.60 V245.60 Q837.6,246.20 838.2,246.20 H842.9 Q843.5,246.20 843.5,245.60 V243.40"/><path d="M839.7,244.20 L840,242.80 L843,239.80 L844,240.80 L841,243.80 Z"/></g>
<g stroke="#e8394a" stroke-width="1.4" stroke-linecap="round"><path d="M592.1,258.30 L596.5,262.90 M596.5,258.30 L592.1,262.90"/></g><circle cx="592.2" cy="258.40" r="0.9" fill="#e8394a"/><circle cx="596.4" cy="258.40" r="0.9" fill="#e8394a"/>
<g fill="none" stroke="#5d626a" stroke-width="0.6" stroke-linecap="round" stroke-linejoin="round"><path d="M822.6,259.80 C823.3,259.10 824.1,258.80 824.9,258.80 C826.6,258.80 827.9,260.20 827.9,261.90 C827.9,263.60 826.6,265.00 824.9,265.00 C824,265.00 823.3,264.70 822.7,264.10"/><path d="M822.3,258.60 L822.4,260.10 L823.9,260.10"/><path d="M825,260.60 V262.10 L826,263.00"/></g>
<g fill="none" stroke="#5d626a" stroke-width="0.6" stroke-linecap="round" stroke-linejoin="round"><path d="M840.3,258.90 H838.2 Q837.6,258.90 837.6,259.50 V264.50 Q837.6,265.10 838.2,265.10 H842.9 Q843.5,265.10 843.5,264.50 V262.30"/><path d="M839.7,263.10 L840,261.70 L843,258.70 L844,259.70 L841,262.70 Z"/></g>
<circle cx="594.2" cy="279.50" r="3.2" fill="#0b7cfe"/><path d="M593.2,277.80 L595.9,279.50 L593.2,281.20 Z" fill="#fff"/>
<g fill="none" stroke="#5d626a" stroke-width="0.6" stroke-linecap="round" stroke-linejoin="round"><path d="M822.6,278.70 C823.3,278.00 824.1,277.70 824.9,277.70 C826.6,277.70 827.9,279.10 827.9,280.80 C827.9,282.50 826.6,283.90 824.9,283.90 C824,283.90 823.3,283.60 822.7,283.00"/><path d="M822.3,277.50 L822.4,279.00 L823.9,279.00"/><path d="M825,279.50 V281.00 L826,281.90"/></g>
<g fill="none" stroke="#5d626a" stroke-width="0.6" stroke-linecap="round" stroke-linejoin="round"><path d="M840.3,277.80 H838.2 Q837.6,277.80 837.6,278.40 V283.40 Q837.6,284.00 838.2,284.00 H842.9 Q843.5,284.00 843.5,283.40 V281.20"/><path d="M839.7,282.00 L840,280.60 L843,277.60 L844,278.60 L841,281.60 Z"/></g>
<circle cx="594.2" cy="298.50" r="3.2" fill="#0b7cfe"/><path d="M593.2,296.80 L595.9,298.50 L593.2,300.20 Z" fill="#fff"/>
<g fill="none" stroke="#5d626a" stroke-width="0.6" stroke-linecap="round" stroke-linejoin="round"><path d="M822.6,297.70 C823.3,297.00 824.1,296.70 824.9,296.70 C826.6,296.70 827.9,298.10 827.9,299.80 C827.9,301.50 826.6,302.90 824.9,302.90 C824,302.90 823.3,302.60 822.7,302.00"/><path d="M822.3,296.50 L822.4,298.00 L823.9,298.00"/><path d="M825,298.50 V300.00 L826,300.90"/></g>
<g fill="none" stroke="#5d626a" stroke-width="0.6" stroke-linecap="round" stroke-linejoin="round"><path d="M840.3,296.80 H838.2 Q837.6,296.80 837.6,297.40 V302.40 Q837.6,303.00 838.2,303.00 H842.9 Q843.5,303.00 843.5,302.40 V300.20"/><path d="M839.7,301.00 L840,299.60 L843,296.60 L844,297.60 L841,300.60 Z"/></g>
<circle cx="594.2" cy="317.50" r="3.2" fill="#0b7cfe"/><path d="M593.2,315.80 L595.9,317.50 L593.2,319.20 Z" fill="#fff"/>
<g fill="none" stroke="#5d626a" stroke-width="0.6" stroke-linecap="round" stroke-linejoin="round"><path d="M822.6,316.70 C823.3,316.00 824.1,315.70 824.9,315.70 C826.6,315.70 827.9,317.10 827.9,318.80 C827.9,320.50 826.6,321.90 824.9,321.90 C824,321.90 823.3,321.60 822.7,321.00"/><path d="M822.3,315.50 L822.4,317.00 L823.9,317.00"/><path d="M825,317.50 V319.00 L826,319.90"/></g>
<g fill="none" stroke="#5d626a" stroke-width="0.6" stroke-linecap="round" stroke-linejoin="round"><path d="M840.3,315.80 H838.2 Q837.6,315.80 837.6,316.40 V321.40 Q837.6,322.00 838.2,322.00 H842.9 Q843.5,322.00 843.5,321.40 V319.20"/><path d="M839.7,320.00 L840,318.60 L843,315.60 L844,316.60 L841,319.60 Z"/></g>
<g stroke="#e8394a" stroke-width="1.4" stroke-linecap="round"><path d="M592.1,334.00 L596.5,338.60 M596.5,334.00 L592.1,338.60"/></g><circle cx="592.2" cy="334.10" r="0.9" fill="#e8394a"/><circle cx="596.4" cy="334.10" r="0.9" fill="#e8394a"/>
<g fill="none" stroke="#5d626a" stroke-width="0.6" stroke-linecap="round" stroke-linejoin="round"><path d="M822.6,335.50 C823.3,334.80 824.1,334.50 824.9,334.50 C826.6,334.50 827.9,335.90 827.9,337.60 C827.9,339.30 826.6,340.70 824.9,340.70 C824,340.70 823.3,340.40 822.7,339.80"/><path d="M822.3,334.30 L822.4,335.80 L823.9,335.80"/><path d="M825,336.30 V337.80 L826,338.70"/></g>
<g fill="none" stroke="#5d626a" stroke-width="0.6" stroke-linecap="round" stroke-linejoin="round"><path d="M840.3,334.60 H838.2 Q837.6,334.60 837.6,335.20 V340.20 Q837.6,340.80 838.2,340.80 H842.9 Q843.5,340.80 843.5,340.20 V338.00"/><path d="M839.7,338.80 L840,337.40 L843,334.40 L844,335.40 L841,338.40 Z"/></g>
<circle cx="594.2" cy="362.60" r="3.2" fill="#0b7cfe"/><path d="M593.2,360.90 L595.9,362.60 L593.2,364.30 Z" fill="#fff"/>
<g fill="none" stroke="#5d626a" stroke-width="0.6" stroke-linecap="round" stroke-linejoin="round"><path d="M822.6,361.80 C823.3,361.10 824.1,360.80 824.9,360.80 C826.6,360.80 827.9,362.20 827.9,363.90 C827.9,365.60 826.6,367.00 824.9,367.00 C824,367.00 823.3,366.70 822.7,366.10"/><path d="M822.3,360.60 L822.4,362.10 L823.9,362.10"/><path d="M825,362.60 V364.10 L826,365.00"/></g>
<g fill="none" stroke="#5d626a" stroke-width="0.6" stroke-linecap="round" stroke-linejoin="round"><path d="M840.3,360.90 H838.2 Q837.6,360.90 837.6,361.50 V366.50 Q837.6,367.10 838.2,367.10 H842.9 Q843.5,367.10 843.5,366.50 V364.30"/><path d="M839.7,365.10 L840,363.70 L843,360.70 L844,361.70 L841,364.70 Z"/></g>
<circle cx="594.3" cy="381.70" r="2.55" fill="none" stroke="#4e5460" stroke-width="1.4"/>
<g fill="none" stroke="#5d626a" stroke-width="0.6" stroke-linecap="round" stroke-linejoin="round"><path d="M822.6,380.90 C823.3,380.20 824.1,379.90 824.9,379.90 C826.6,379.90 827.9,381.30 827.9,383.00 C827.9,384.70 826.6,386.10 824.9,386.10 C824,386.10 823.3,385.80 822.7,385.20"/><path d="M822.3,379.70 L822.4,381.20 L823.9,381.20"/><path d="M825,381.70 V383.20 L826,384.10"/></g>
<g fill="none" stroke="#5d626a" stroke-width="0.6" stroke-linecap="round" stroke-linejoin="round"><path d="M840.3,380.00 H838.2 Q837.6,380.00 837.6,380.60 V385.60 Q837.6,386.20 838.2,386.20 H842.9 Q843.5,386.20 843.5,385.60 V383.40"/><path d="M839.7,384.20 L840,382.80 L843,379.80 L844,380.80 L841,383.80 Z"/></g>
<circle cx="594.2" cy="399.80" r="3.2" fill="#0b7cfe"/><path d="M593.2,398.10 L595.9,399.80 L593.2,401.50 Z" fill="#fff"/>
<g fill="none" stroke="#5d626a" stroke-width="0.6" stroke-linecap="round" stroke-linejoin="round"><path d="M822.6,399.00 C823.3,398.30 824.1,398.00 824.9,398.00 C826.6,398.00 827.9,399.40 827.9,401.10 C827.9,402.80 826.6,404.20 824.9,404.20 C824,404.20 823.3,403.90 822.7,403.30"/><path d="M822.3,397.80 L822.4,399.30 L823.9,399.30"/><path d="M825,399.80 V401.30 L826,402.20"/></g>
<g fill="none" stroke="#5d626a" stroke-width="0.6" stroke-linecap="round" stroke-linejoin="round"><path d="M840.3,398.10 H838.2 Q837.6,398.10 837.6,398.70 V403.70 Q837.6,404.30 838.2,404.30 H842.9 Q843.5,404.30 843.5,403.70 V401.50"/><path d="M839.7,402.30 L840,400.90 L843,397.90 L844,398.90 L841,401.90 Z"/></g>
</svg>
</div>
</body></html>
